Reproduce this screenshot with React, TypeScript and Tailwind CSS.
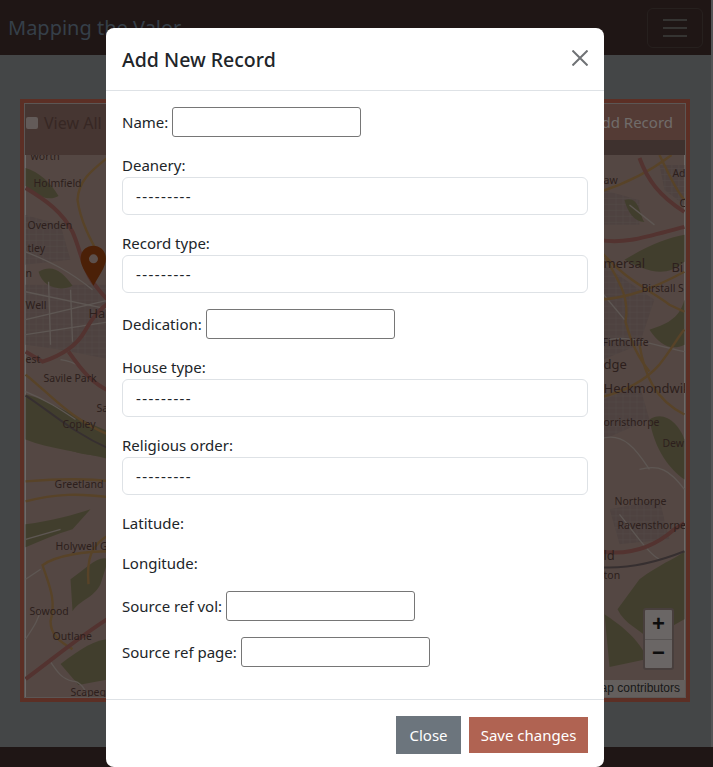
import React from 'react';

const pinkRoads = [
  'M25 188 C45 200 62 212 72 232 C80 250 82 268 92 282 C100 292 104 298 110 302',
  'M110 302 C98 310 92 318 84 332 C76 346 60 356 42 362 L25 352',
  'M68 352 C82 372 92 384 110 392',
  'M25 680 C50 662 75 640 110 618',
  'M600 240 C625 245 650 236 685 227',
  'M640 158 C648 180 660 196 685 212',
  'M600 552 C625 556 650 552 675 530 L685 524',
];
const orangeRoads = [
  'M108 157 C92 170 78 180 77 200 C80 222 90 240 102 262',
  'M25 375 C50 395 70 420 110 436',
  'M25 482 C50 480 80 478 110 482',
  'M25 502 C55 494 80 494 110 498',
  'M110 535 C90 545 86 560 88 585',
  'M110 552 C85 552 55 556 42 566 C48 585 56 600 50 622 C50 635 58 642 72 650',
  'M600 192 C625 184 650 172 672 155',
  'M600 250 C625 280 650 290 670 305 L685 312',
  'M600 300 C630 298 655 288 685 272',
  'M606 258 C622 285 630 300 626 322 C632 345 640 360 650 372',
  'M600 398 C625 392 645 382 660 365 C672 350 680 335 685 330',
  'M640 345 C645 375 655 400 685 415',
  'M660 155 C670 175 676 190 685 200',
];
const minorRoads = [
  'M25 292 L110 310', 'M25 320 L110 300', 'M25 335 L110 322', 'M48 282 L50 345', 'M70 290 L72 342',
  'M25 252 C50 262 70 272 92 290', 'M60 360 C75 362 84 368 88 380', 'M25 392 C45 400 60 410 75 420',
  'M25 540 L60 530', 'M25 580 L40 570', 'M25 640 C35 625 38 620 40 610', 'M48 660 C55 670 60 680 72 682 C80 682 84 690 88 698',
  'M600 440 C625 430 640 455 650 470', 'M620 515 C640 540 650 555 660 560', 'M630 205 L655 225', 'M610 340 C630 335 650 345 685 352',
  'M600 290 L625 320', 'M640 470 C660 465 670 470 685 490',
];
const greenPatches = [
  'M25 168 C38 172 50 182 58 196 C45 204 30 190 25 186 Z',
  'M38 272 C52 264 62 272 72 286 C60 292 42 288 38 272 Z',
  'M25 395 C50 400 85 425 110 432 L110 460 C80 452 50 450 25 440 Z',
  'M40 428 C60 420 90 424 110 440 L100 456 C80 456 55 450 40 428 Z',
  'M25 525 C50 522 75 515 90 510 L72 530 C55 535 40 542 25 548 Z',
  'M70 580 C85 570 98 555 108 560 L100 585 C92 600 80 600 72 612 Z',
  'M60 665 C80 650 95 640 110 640 L110 680 L78 686 Z',
  'M625 200 C640 195 640 215 645 222 C635 222 628 212 625 200 Z',
  'M625 260 C650 245 668 238 685 235 L685 262 C665 280 645 270 625 260 Z',
  'M650 330 C665 325 680 320 685 300 L685 345 C672 352 660 345 650 330 Z',
  'M650 420 C665 410 680 425 685 440 L685 480 C670 470 655 450 650 420 Z',
  'M640 580 C660 565 675 560 685 552 L685 620 L650 640 C640 630 625 625 618 610 Z',
  'M605 615 C620 625 640 640 648 660 L610 668 Z',
];
const urbanAreas = [
  'M25 285 L106 285 L110 360 L60 350 L25 345 Z',
  'M25 215 L60 225 L70 260 L25 265 Z',
  'M604 190 L640 200 L640 225 L604 225 Z',
  'M604 265 L655 300 L640 345 L604 360 Z',
  'M660 165 L685 165 L685 205 L665 190 Z',
  'M604 400 L640 385 L650 420 L604 440 Z',
  'M610 510 L660 500 L670 540 L620 545 Z',
];
const labels: [number, number, string, number][] = [
  [30, 160, 'worth', 10.5], [33, 187, 'Holmfield', 10.5], [27, 229, 'Ovenden', 10.5], [27, 252, 'tley', 10.5],
  [25, 277, 'n', 10.5], [25, 309, 'Well', 10.5], [88, 318, 'Ha', 13], [25, 363, 'est', 10.5],
  [43, 382, 'Savile Park', 10.5], [96, 412, 'Sa', 10.5], [62, 429, 'Copley', 10.5], [54, 489, 'Greetland', 10.5],
  [55, 551, 'Holywell G', 10.5], [29, 616, 'Sowood', 10.5], [52, 641, 'Outlane', 10.5], [70, 697, 'Scapego', 10.5],
  [604, 184, 'aw', 10.5], [673, 177, 'Ad', 10.5], [680, 207, 'C', 10.5], [604, 268, 'mersal', 13], [672, 272, 'Bi', 13],
  [642, 292, 'Birstall S', 10.5], [603, 346, 'Firthcliffe', 10.5], [604, 369, 'dge', 13], [604, 393, 'Heckmondwik', 13],
  [604, 427, 'orristhorpe', 10.5], [663, 448, 'Dew', 10.5], [615, 506, 'Northorpe', 10.5], [618, 530, 'Ravensthorpe', 10.5],
  [604, 561, 'ld', 13], [604, 580, 'ton', 10.5],
];

function MapArt() {
  return (
    <svg viewBox="25 155 660 543" className="block w-full h-full font-['Noto_Sans',sans-serif]">
      <defs>
        <pattern id="urban" width="7" height="6" patternUnits="userSpaceOnUse">
          <rect width="7" height="6" fill="#9c8580" />
          <path d="M0 0h7M0 0v6" stroke="#a99590" strokeWidth="1" />
        </pattern>
      </defs>
      <rect x="25" y="155" width="660" height="543" fill="#a98f86" />
      {urbanAreas.map((d) => <path key={d} d={d} fill="url(#urban)" />)}
      {greenPatches.map((d) => <path key={d} d={d} fill="#837d5b" />)}
      {minorRoads.map((d) => <path key={d} d={d} fill="none" stroke="#bcaea7" strokeWidth="1.3" />)}
      {orangeRoads.map((d) => <path key={d} d={d} fill="none" stroke="#b08650" strokeWidth="2.4" />)}
      {pinkRoads.map((d) => <path key={d} d={d} fill="none" stroke="#a66660" strokeWidth="4" />)}
      <path d="M25 396 C50 412 70 432 110 450" fill="none" stroke="#6d5f60" strokeWidth="2" />
      <path d="M600 568 C630 570 660 562 685 552" fill="none" stroke="#6d5f60" strokeWidth="2" />
      {labels.map(([x, y, t, s]) => (
        <text key={t} x={x} y={y} fontSize={s} fill="#5a3f3a">{t}</text>
      ))}
      <path d="M93 246 C85.500 246 80 251.500 80 259 C80 267 88 277 93 286 C98 277 105.500 267 105.500 259 C105.500 251.500 100 246 93 246 Z" fill="#96400f" />
      <circle cx="93" cy="259" r="4.500" fill="#b9a098" />
    </svg>
  );
}

function Field({ label }: { label: string }) {
  return (
    <div className="flex items-center h-[30px] mb-4">
      <label>{label}</label>
      <input type="text" className="ml-1 w-[189px] h-[30px] border border-[#767676] rounded-[3px] bg-white" />
    </div>
  );
}

function SelectField({ label }: { label: string }) {
  return (
    <div className="mb-4">
      <label className="block h-6 leading-6">{label}</label>
      <select className="block w-full h-[38px] pl-[13px] border border-[#dee2e6] rounded-md bg-white appearance-none tracking-[1.4px] text-[#212529]">
        <option>---------</option>
      </select>
    </div>
  );
}

export default function App() {
  return (
    <div className="relative h-[767px] overflow-hidden bg-[#a6a8aa] font-['Noto_Sans',sans-serif]">
      {/* Page behind the modal */}
      <div className="flex flex-col h-full w-[711px] bg-[#888c8f]">
        <nav className="flex items-center justify-between h-[55px] shrink-0 bg-[#3e2c2a] pl-2 pr-2">
          <span className="text-xl text-[#6b7f92]">Mapping the Valor</span>
          <button className="flex flex-col justify-center gap-[6px] w-14 h-10 border border-[#4c403d] rounded-md items-center">
            <span className="block w-6 h-[2px] bg-[#6a6864]" />
            <span className="block w-6 h-[2px] bg-[#6a6864]" />
            <span className="block w-6 h-[2px] bg-[#6a6864]" />
          </button>
        </nav>
        <main className="flex-1 pt-11 px-5">
          <div className="flex flex-col w-[670px] h-[603px] border-4 border-[#b85f4a] bg-white">
            <div className="border border-[#b8aca8] flex flex-col h-full">
              <div className="flex h-[51px] shrink-0 bg-[#8c6c64]">
                <div className="flex items-start pt-[10px] text-[#6e4f48]">
                  <input type="checkbox" className="w-[12px] h-[12px] mt-[3px] ml-[1px] mr-[6px] appearance-none bg-[#fff] opacity-50 rounded-[2px]" />
                  <span className="leading-[18px]">View All</span>
                  <input type="checkbox" className="w-[12px] h-[12px] mt-[3px] ml-1 appearance-none bg-[#fff] opacity-50 rounded-[2px]" />
                </div>
                <div className="ml-auto flex flex-col w-[100px] h-full bg-[#7c625c]">
                  <div className="h-9 bg-[#a8766a] pr-3 text-right leading-9 text-[15px] text-[#e0d8d4]">Add Record</div>
                </div>
              </div>
              <div className="relative flex-1 min-h-0 overflow-hidden">
                <MapArt />
                <div className="absolute right-[11px] top-[453px] w-[31px] rounded-[3px] border-2 border-[#907e7a] bg-[#d4cccb] text-[#1a1a1a] overflow-hidden">
                  <div className="h-[30px] leading-[28px] text-center text-[22px] font-bold border-b border-[#b0a8a6] font-['Liberation_Sans',sans-serif]">+</div>
                  <div className="h-[28px] leading-[26px] text-center text-[22px] font-bold font-['Liberation_Sans',sans-serif]">−</div>
                </div>
                <div className="absolute right-0 bottom-0 h-[17px] bg-[#c8bfbb] pr-[5px] pl-1 text-xs leading-[17px] text-[#333] font-['Liberation_Sans',sans-serif]">© OpenStreetMap contributors</div>
              </div>
            </div>
          </div>
        </main>
      </div>
      <div className="absolute left-0 right-0 bottom-0 h-5 bg-[#3e2c2a]" />

      {/* Backdrop and modal */}
      <div className="absolute inset-0 bg-[rgba(0,0,0,0.5)] flex justify-center items-start pt-7 pr-[3px] overflow-hidden">
        <div className="w-[498px] h-[739px] shrink-0 flex flex-col bg-white rounded-lg text-[15px] text-[#212529]">
          <div className="flex items-center justify-between h-[63px] shrink-0 pl-4 pr-4 pt-[2px] border-b border-[#dee2e6]">
            <h5 className="text-[19.500px] font-medium">Add New Record</h5>
            <svg width="16" height="16" viewBox="0 0 16 16" className="-mt-[4px] text-[#6f7275]">
              <path d="M.5.5l15 15M15.500.5l-15 15" stroke="currentColor" strokeWidth="2" fill="none" />
            </svg>
          </div>
          <div className="flex-1 p-4 pb-0">
            <Field label="Name:" />
            <SelectField label="Deanery:" />
            <SelectField label="Record type:" />
            <Field label="Dedication:" />
            <SelectField label="House type:" />
            <SelectField label="Religious order:" />
            <p className="h-6 leading-6 mb-4">Latitude:</p>
            <p className="h-6 leading-6 mb-4">Longitude:</p>
            <Field label="Source ref vol:" />
            <Field label="Source ref page:" />
          </div>
          <div className="flex items-start justify-end gap-2 h-[68px] shrink-0 px-4 pt-4 border-t border-[#dee2e6]">
            <button className="w-[65px] h-[38px] bg-[#6c757d] text-white">Close</button>
            <button className="w-[119px] h-9 mt-[1px] bg-[#b06352] text-white">Save changes</button>
          </div>
        </div>
      </div>
    </div>
  );
}
